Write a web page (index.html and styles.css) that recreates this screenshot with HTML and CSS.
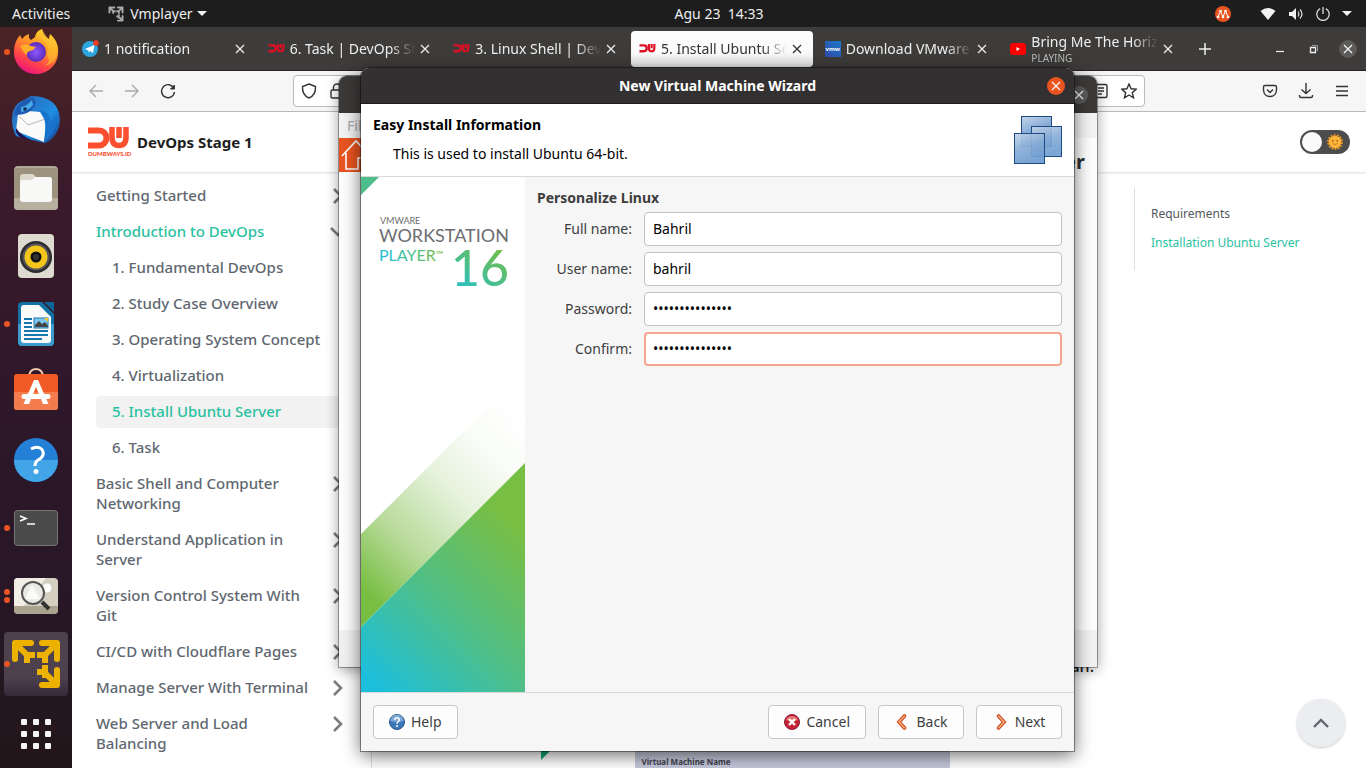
FILE: index.html
```html
<!DOCTYPE html>
<html lang="en">
<head>
<meta charset="utf-8">
<title>New Virtual Machine Wizard</title>
<link rel="stylesheet" href="styles.css">
</head>
<body>
<svg class="defs" aria-hidden="true">
  <defs>
    <symbol id="vmw" viewBox="0 0 64 64">
      <g fill="none" stroke="currentColor" stroke-width="6" stroke-linejoin="round" stroke-linecap="round">
        <path d="M27 11H11V27M38 11H53V27M38 53H53V38"/>
      </g>
      <g fill="none" stroke="currentColor" stroke-width="6">
        <path d="M12 12L24 24M52 12L41 23M52 52L41 41M20 23H31M23 21V31M33 23H44M41 20V31M33 40H44M41 33V46"/>
      </g>
    </symbol>
    <symbol id="x" viewBox="0 0 10 10"><path d="M1 1L9 9M9 1L1 9" fill="none" stroke="currentColor" stroke-width="1.3"/></symbol>
    <symbol id="dw" viewBox="0 0 41 23">
      <path d="M0 3.500H11A7.500 7.500 0 0 1 11 18.500H0" fill="none" stroke="currentColor" stroke-width="6"/>
      <path d="M24 0V10Q24 18.500 31 18.500T38 10V0M31 0V11" fill="none" stroke="currentColor" stroke-width="5.500"/>
    </symbol>
    <symbol id="chev" viewBox="0 0 12 16"><path d="M2 1L9 8L2 15" fill="none" stroke="#7b7b7b" stroke-width="2.600"/></symbol>
  </defs>
</svg>

<div class="desktop">
  <header class="topbar">
    <div class="topbar-left">
      <button class="plain">Activities</button>
      <button class="plain app-menu"><svg width="20" height="20" class="gray"><use href="#vmw"/></svg>Vmplayer<span class="caret"></span></button>
    </div>
    <time class="clock">Agu 23&nbsp; 14:33</time>
    <div class="tray">
      <svg width="16" height="16" viewBox="0 0 16 16"><circle cx="8" cy="8" r="8" fill="#e95420"/><path d="M3 11L5.500 5L8 11L10.500 5L13 11" fill="none" stroke="#fff" stroke-width="1"/><g fill="#fff"><circle cx="3" cy="11" r="1.300"/><circle cx="5.500" cy="5" r="1.300"/><circle cx="8" cy="11" r="1.300"/><circle cx="10.500" cy="5" r="1.300"/><circle cx="13" cy="11" r="1.300"/></g></svg>
      <svg class="wifi" width="16" height="14" viewBox="0 0 16 14"><path d="M0.500 4Q8 -2 15.500 4L8 13Z" fill="#f2f2f2"/></svg>
      <svg width="16" height="14" viewBox="0 0 16 14"><path d="M1 5H4L8 1V13L4 9H1Z" fill="#f2f2f2"/><path d="M10 4.500Q11.800 7 10 9.500M12 2.500Q16 7 12 11.500" fill="none" stroke="#ddd" stroke-width="1.200"/></svg>
      <svg width="14" height="14" viewBox="0 0 14 14"><path d="M4.200 1.700A6.200 6.200 0 1 0 9.800 1.700M7 0V7" fill="none" stroke="#ddd" stroke-width="1.300"/></svg>
      <span class="caret"></span>
    </div>
  </header>

  <div class="work">
    <nav class="dock" aria-label="Dock">
      <button aria-label="Firefox"><svg viewBox="0 0 64 64"><defs><linearGradient id="ff" x1="0.800" y1="0" x2="0.300" y2="1"><stop offset="0" stop-color="#ffe226"/><stop offset=".45" stop-color="#ff8a2a"/><stop offset=".75" stop-color="#ff3f4c"/><stop offset="1" stop-color="#e5127f"/></linearGradient><radialGradient id="fp"><stop offset="0" stop-color="#9059ff"/><stop offset="1" stop-color="#5b2bb8"/></radialGradient></defs><circle cx="3" cy="32" r="3" fill="#e95420"/><path d="M31 17C32 12 35 10 38 9C39 15 42 17 45 19L46 14C53 20 55 27 54 34C53 46 43 54 32 54C19 54 10 44 10 32C10 25 12 20 16 15L18 19Q21 15 25 14Q24 18 27 20Z" fill="url(#ff)"/><circle cx="32" cy="32" r="10" fill="url(#fp)"/><path d="M16 26Q22 23 27 26L32 27Q30 30 26 31Q22 32 23 36Q19 32 16 26Z" fill="#ffae2b"/><path d="M33 16Q46 20 43 36Q48 43 39 46Q55 44 53 26Q51 20 46 14L45 19Q42 17 38 9Q35 11 33 16Z" fill="#fdc52f" opacity=".6"/></svg></button>
      <button aria-label="Thunderbird"><svg viewBox="0 0 64 64"><defs><linearGradient id="tb" x1="0" y1="0" x2="1" y2="1"><stop offset="0" stop-color="#2c62b8"/><stop offset=".6" stop-color="#1f8ee0"/><stop offset="1" stop-color="#173a8c"/></linearGradient></defs><path d="M8 32Q8 16 20 12L27 8Q50 8 55 25Q58 38 51 47Q46 54 40 55L12 48Q8 40 8 32Z" fill="url(#tb)"/><path d="M14 26Q20 22 36 24L42 34L40 54L12 43Z" fill="#fafafa"/><path d="M15 28L24 37L41 31" fill="none" stroke="#b8b8b8"/><path d="M10 28Q12 14 28 9Q34 12 30 19Q26 26 13 27Z" fill="#1d5bb0"/><path d="M17 19Q23 18 28 12L29 17Q24 23 17 24Z" fill="#48a8e8"/><circle cx="21" cy="21" r="1.800" fill="#142a50"/><path d="M12 40Q17 48 28 52Q16 52 12 44Z" fill="#241250"/><path d="M36 22Q48 24 45 36L54 27Q54 40 45 49L40 55Q43 40 40 30Z" fill="#1873cc"/></svg></button>
      <button aria-label="Files"><svg viewBox="0 0 64 64"><rect x="10" y="10" width="44" height="44" rx="4" fill="#9c927e"/><path d="M11 13Q11 11 14 11H50Q53 11 53 13" stroke="#c4bdab" fill="none"/><path d="M10 42H54V50Q54 54 50 54H14Q10 54 10 50Z" fill="#b7b09e"/><path d="M16 21Q16 18 19 18H29L32 21H45Q48 21 48 24V34H16Z" fill="#ddd8cc"/><path d="M16 26Q16 24 18 24H28L31 21H45Q48 21 48 24V43Q48 46 45 46H19Q16 46 16 43Z" fill="#f8f8f7"/></svg></button>
      <button aria-label="Rhythmbox"><svg viewBox="0 0 64 64"><rect x="14" y="10" width="36" height="44" rx="4" fill="#dedad0"/><circle cx="32" cy="33" r="16" fill="#2b2b30"/><circle cx="32" cy="33" r="13.500" fill="#55555b"/><circle cx="32" cy="33" r="11.500" fill="#f4c61b"/><circle cx="32" cy="33" r="5.500" fill="#111"/><circle cx="32" cy="33" r="3" fill="#333"/></svg></button>
      <button aria-label="LibreOffice Writer"><svg viewBox="0 0 64 64"><circle cx="3" cy="32" r="3" fill="#e95420"/><path d="M18 10H38L50 22V50Q50 54 46 54H18Q14 54 14 50V14Q14 10 18 10Z" fill="#1271a5"/><path d="M14 32H50V50Q50 54 46 54H18Q14 54 14 50Z" fill="#3c9ccd"/><path d="M40 10H50V20Z" fill="#0e6496"/><path d="M20 13H35L47 25V48Q47 51 44 51H20Q17 51 17 48V16Q17 13 20 13Z" fill="#fafafa"/><path d="M20 27H28M20 31H28M20 35H28M20 39H44M20 43H44M20 47H38" stroke="#1478ae" stroke-width="1.800"/><rect x="30" y="26" width="14" height="10" fill="#7ec7f1" stroke="#1478ae"/><path d="M31 35V33L35 29L38 32L41 30L44 34V35Z" fill="#444"/><path d="M40 26H44V30Z" fill="#f6c51b"/></svg></button>
      <button aria-label="Ubuntu Software"><svg viewBox="0 0 64 64"><path d="M25 18Q25 9 32 9T39 18" fill="none" stroke="#f5c9ad" stroke-width="2"/><rect x="10" y="14" width="44" height="36" rx="3" fill="#f05a24"/><path d="M10 32H54V47Q54 50 51 50H13Q10 50 10 47Z" fill="#f37b4d"/><path d="M30 20H34L44.500 44H39L32 27L25 44H19.500Z" fill="#fff"/><path d="M20 36.500H44" stroke="#fff" stroke-width="5" stroke-linecap="round"/></svg></button>
      <button aria-label="Help"><svg viewBox="0 0 64 64"><circle cx="32" cy="32" r="22" fill="#2380d6"/><path d="M10 32A22 22 0 0 0 54 32Z" fill="#41a5e8"/><path d="M27 21Q32 18 36 20Q40 22 39 27Q38 30 34 32Q31 34 31 38" fill="none" stroke="#fff" stroke-width="3"/><circle cx="32" cy="43.500" r="2.500" fill="#fff"/></svg></button>
      <button aria-label="Terminal"><svg viewBox="0 0 64 64"><circle cx="3" cy="32" r="3" fill="#e95420"/><rect x="10.500" y="14.500" width="43" height="35" rx="3" fill="#4b4b4b" stroke="#777"/><path d="M16 20L22 22.500L16 25M23 28H31" fill="none" stroke="#fff" stroke-width="1.600"/></svg></button>
      <button aria-label="Image Viewer"><svg viewBox="0 0 64 64"><circle cx="3" cy="28" r="3" fill="#e95420"/><circle cx="3" cy="36" r="3" fill="#e95420"/><rect x="10" y="14" width="44" height="36" rx="4" fill="#d3cfc1"/><path d="M14 14H42L20 42H10V18Q10 14 14 14Z" fill="#f1eee6"/><path d="M10 42H54V46Q54 50 50 50H14Q10 50 10 46Z" fill="#aaa38f"/><circle cx="43" cy="24" r="4.500" fill="#fff"/><circle cx="29" cy="29" r="11" fill="#eceae4" stroke="#555" stroke-width="2"/><path d="M21 35L28 21L36 35Z" fill="#fafafa"/><path d="M38 38L45 45" stroke="#333" stroke-width="4"/></svg></button>
      <button aria-label="VMware Player" class="current"><svg viewBox="0 0 64 64"><circle cx="3" cy="32" r="3" fill="#e95420"/><use href="#vmw" color="#edb200"/></svg></button>
      <button aria-label="Show Applications" class="apps"><svg viewBox="0 0 30 30"><g fill="#f4f4f4"><rect width="6" height="6" rx="1"/><rect x="12" width="6" height="6" rx="1"/><rect x="24" width="6" height="6" rx="1"/><rect y="12" width="6" height="6" rx="1"/><rect x="12" y="12" width="6" height="6" rx="1"/><rect x="24" y="12" width="6" height="6" rx="1"/><rect y="24" width="6" height="6" rx="1"/><rect x="12" y="24" width="6" height="6" rx="1"/><rect x="24" y="24" width="6" height="6" rx="1"/></g></svg></button>
    </nav>

    <div class="browser">
      <div class="tabstrip">
        <div class="tabs">
          <div class="tab"><svg width="17" height="17" viewBox="0 0 17 17"><circle cx="8" cy="9" r="8" fill="#2ca5e0"/><path d="M3 9L12.500 5L11 13L8 11L6.500 12.500V10.500Z" fill="#fff"/><circle cx="14" cy="3" r="2.800" fill="#f43b20"/></svg><span class="title">1 notification</span><button class="close" aria-label="Close tab"><svg><use href="#x"/></svg></button></div>
          <div class="tab"><svg class="red" width="17" height="9"><use href="#dw"/></svg><span class="title">6. Task | DevOps Stage 1</span><button class="close" aria-label="Close tab"><svg><use href="#x"/></svg></button></div>
          <div class="tab"><svg class="red" width="17" height="9"><use href="#dw"/></svg><span class="title">3. Linux Shell | DevOps</span><button class="close" aria-label="Close tab"><svg><use href="#x"/></svg></button></div>
          <div class="tab active"><svg class="red" width="17" height="9"><use href="#dw"/></svg><span class="title">5. Install Ubuntu Server</span><button class="close" aria-label="Close tab"><svg><use href="#x"/></svg></button></div>
          <div class="tab"><span class="vmw-fav">vmw</span><span class="title">Download VMware</span><button class="close" aria-label="Close tab"><svg><use href="#x"/></svg></button></div>
          <div class="tab"><svg width="16" height="12" viewBox="0 0 16 12"><rect width="16" height="12" rx="3" fill="#f00"/><path d="M6.500 4L10 6L6.500 8Z" fill="#fff"/></svg><span class="title">Bring Me The Horizon<small>PLAYING</small></span><button class="close" aria-label="Close tab"><svg><use href="#x"/></svg></button></div>
        </div>
        <button class="newtab" aria-label="New tab"><svg width="12" height="12" viewBox="0 0 12 12"><path d="M6 0V12M0 6H12" stroke="#eee" stroke-width="1.500"/></svg></button>
        <div class="controls">
          <button aria-label="Minimize"><svg width="10" height="10" viewBox="0 0 10 10"><path d="M1 7.500H9" stroke="#eee" stroke-width="1.200"/></svg></button>
          <button aria-label="Restore"><svg width="10" height="10" viewBox="0 0 10 10"><path d="M1.500 3.500H6.500V8.500H1.500Z" fill="none" stroke="#eee" stroke-width="1.300"/><path d="M3 1.500H8.500V7" fill="none" stroke="#999"/></svg></button>
          <button aria-label="Close window"><span class="round"><svg><use href="#x"/></svg></span></button>
        </div>
      </div>

      <div class="toolbar">
        <button aria-label="Back" class="dim"><svg width="16" height="16" viewBox="0 0 16 16"><path d="M15 8H2M8 2L2 8L8 14"/></svg></button>
        <button aria-label="Forward" class="dim"><svg width="16" height="16" viewBox="0 0 16 16"><path d="M1 8H14M8 2L14 8L8 14"/></svg></button>
        <button aria-label="Reload"><svg width="16" height="16" viewBox="0 0 16 16"><path d="M14 5.500A6.500 6.500 0 1 0 14.500 9"/><path d="M14.500 2V6H10.500Z" fill="#333" stroke-width="1"/></svg></button>
        <span class="spacer"></span>
        <div class="urlbar">
          <svg width="16" height="16" viewBox="0 0 16 16"><path d="M8 1L14.500 3.500Q15 12 8 15Q1 12 1.500 3.500Z"/></svg>
          <svg width="16" height="16" viewBox="0 0 16 16"><rect x="2" y="7" width="12" height="8" rx="1.500"/><path d="M4.500 7V4.500A3.500 3.500 0 0 1 11.500 4.500V7"/></svg>
          <input type="text" aria-label="Address">
          <svg width="16" height="16" viewBox="0 0 16 16"><rect x="2" y="1.500" width="12" height="13" rx="1.500"/><path d="M5 5H11M5 8H11M5 11H9"/></svg>
          <svg width="16" height="16" viewBox="0 0 16 16"><path d="M8 1L10.100 5.800L15.200 6.200L11.300 9.600L12.500 14.800L8 12L3.500 14.800L4.700 9.600L0.800 6.200L5.900 5.800Z"/></svg>
        </div>
        <span class="spacer"></span>
        <button aria-label="Pocket"><svg width="16" height="16" viewBox="0 0 16 16"><path d="M3 2.500H13Q14.500 2.500 14.500 4V7Q14 13.500 8 13.500T1.500 7V4Q1.500 2.500 3 2.500ZM5 6.500L8 9.500L11 6.500"/></svg></button>
        <button aria-label="Downloads"><svg width="16" height="16" viewBox="0 0 16 16"><path d="M8 0V10.500M3.500 6.500L8 10.500L12.500 6.500M1.500 12V13Q1.500 14.500 3 14.500H13Q14.500 14.500 14.500 13V12"/></svg></button>
        <button aria-label="Menu"><svg width="16" height="16" viewBox="0 0 16 16"><path d="M2 3.500H14M2 8H14M2 12.500H14"/></svg></button>
      </div>

      <div class="page">
        <header class="site">
          <a href="#" class="brand">
            <span class="logo"><svg width="41" height="23"><use href="#dw"/></svg><span>DUMBWAYS.ID</span></span>
            DevOps Stage 1
          </a>
          <label class="toggle"><input type="checkbox" aria-label="Dark mode"><span class="knob"></span><svg width="16" height="16" viewBox="0 0 16 16"><circle cx="8" cy="8" r="7" fill="none" stroke="#f79a1c" stroke-width="1.600" stroke-dasharray="2 1.140"/><circle cx="8" cy="8" r="6.200" fill="#fcb53a"/><circle cx="5.800" cy="6.800" r=".9" fill="#a45c10"/><circle cx="10.200" cy="6.800" r=".9" fill="#a45c10"/><path d="M5.500 9.500Q8 11.500 10.500 9.500" stroke="#c8781b" fill="none"/></svg></label>
        </header>
        <div class="docs">
          <nav class="sidebar" aria-label="Docs">
            <a href="#">Getting Started<svg><use href="#chev"/></svg></a>
            <a href="#" class="on">Introduction to DevOps<svg class="open"><use href="#chev"/></svg></a>
            <div class="sub">
              <a href="#">1. Fundamental DevOps</a>
              <a href="#">2. Study Case Overview</a>
              <a href="#">3. Operating System Concept</a>
              <a href="#">4. Virtualization</a>
              <a href="#" class="on here">5. Install Ubuntu Server</a>
              <a href="#">6. Task</a>
            </div>
            <a href="#">Basic Shell and Computer<br>Networking<svg><use href="#chev"/></svg></a>
            <a href="#">Understand Application in<br>Server<svg><use href="#chev"/></svg></a>
            <a href="#">Version Control System With<br>Git<svg><use href="#chev"/></svg></a>
            <a href="#">CI/CD with Cloudflare Pages<svg><use href="#chev"/></svg></a>
            <a href="#">Manage Server With Terminal<svg><use href="#chev"/></svg></a>
            <a href="#">Web Server and Load<br>Balancing<svg><use href="#chev"/></svg></a>
          </nav>
          <main class="article">
            <p>an.</p>
            <div class="figure"><svg width="94" height="60" viewBox="0 0 94 60"><path d="M0 0H30L0 30Z" fill="#12a575"/></svg><div class="shot">Virtual Machine Name</div></div>
          </main>
          <nav class="toc" aria-label="On this page">
            <div class="toc-list"><a href="#">Requirements</a><a href="#" class="on">Installation Ubuntu Server</a></div>
          </nav>
        </div>
        <button class="totop" aria-label="Scroll to top"><svg width="18" height="12" viewBox="0 0 18 12"><path d="M2 10L9 3L16 10" fill="none" stroke="#606770" stroke-width="2.400"/></svg></button>
      </div>
    </div>
  </div>

  <section class="window player" aria-label="VMware Player">
    <div class="player-title"><span class="round"><svg><use href="#x"/></svg></span></div>
    <div class="player-menu">File</div>
    <div class="player-body">
      <svg width="34" height="34" viewBox="0 0 34 34"><rect width="34" height="34" fill="#e95420"/><path d="M3 18L17 3L31 18M7 15V31H19V20H26V31" fill="none" stroke="#fff" stroke-width="1.600"/></svg>
      <h2>Player</h2>
    </div>
    <div class="player-foot"></div>
  </section>

  <section class="window wizard" role="dialog" aria-labelledby="wt">
    <div class="wizard-title"><h1 id="wt">New Virtual Machine Wizard</h1><button class="round orange" aria-label="Close"><svg><use href="#x"/></svg></button></div>
    <div class="wizard-head">
      <div><h2>Easy Install Information</h2><p>This is used to install Ubuntu 64-bit.</p></div>
      <svg width="48" height="48" viewBox="0 0 48 48"><defs><linearGradient id="pane" x1="0" y1="0" x2="0.400" y2="1"><stop offset="0" stop-color="#c3d4e9"/><stop offset=".55" stop-color="#86abd6"/><stop offset="1" stop-color="#6d9dd0"/></linearGradient></defs><g fill="url(#pane)" stroke="#1f4a86"><rect x="7.500" y=".5" width="30" height="30"/><rect x="17.500" y="10.500" width="30" height="30" fill-opacity=".9"/><rect x=".5" y="17.500" width="30" height="30" fill-opacity=".92"/></g></svg>
    </div>
    <div class="wizard-body">
      <svg class="art" viewBox="0 0 164 515" width="164" height="515">
        <defs>
          <linearGradient id="g1" gradientUnits="userSpaceOnUse" x1="10" y1="505" x2="160" y2="355"><stop offset="0" stop-color="#1bbfdc"/><stop offset=".5" stop-color="#50bf86"/><stop offset="1" stop-color="#78be43"/></linearGradient>
          <linearGradient id="g2" gradientUnits="userSpaceOnUse" x1="14" y1="423" x2="179" y2="258"><stop offset="0" stop-color="#78be43"/><stop offset=".26" stop-color="#b7da98"/><stop offset=".55" stop-color="#e4f1da"/><stop offset=".8" stop-color="#f9fcf7"/><stop offset="1" stop-color="#fff"/></linearGradient>
          <linearGradient id="g3"><stop offset="0" stop-color="#1bbfdc"/><stop offset="1" stop-color="#78be43"/></linearGradient>
          <linearGradient id="g4" x1="0" y1="1" x2=".6" y2="0"><stop offset="0" stop-color="#1bbfdc"/><stop offset="1" stop-color="#78be43"/></linearGradient>
        </defs>
        <rect width="164" height="515" fill="#fff"/>
        <path d="M0 0H18L0 18Z" fill="#4ebd8c"/>
        <path d="M0 357L164 193V286L0 450Z" fill="url(#g2)"/>
        <path d="M0 450L164 286V515H0Z" fill="url(#g1)"/>
        <g class="art-text"><text x="19" y="47" font-size="9" fill="#6d6e71">VMWARE</text><text x="18" y="65" font-size="18" fill="#6d6e71">WORKSTATION</text><text x="18" y="84" font-size="16" fill="url(#g3)">PLAYER<tspan font-size="10" dy="-3">™</tspan></text><text x="90" y="109" font-size="50" class="big" fill="url(#g4)">16</text></g>
      </svg>
      <form class="fields">
        <h3>Personalize Linux</h3>
        <label for="fn">Full name:</label><input id="fn" type="text" value="Bahril">
        <label for="un">User name:</label><input id="un" type="text" value="bahril">
        <label for="pw">Password:</label><input id="pw" type="password" value="aaaaaaaaaaaaaaa">
        <label for="cf">Confirm:</label><input id="cf" class="focus" type="password" value="aaaaaaaaaaaaaaa">
      </form>
    </div>
    <div class="wizard-foot">
      <button class="btn help"><svg width="16" height="16" viewBox="0 0 16 16"><circle cx="8" cy="8" r="7.500" fill="#3c78b8" stroke="#2a5688"/><path d="M1.500 7A6.500 6.500 0 0 1 14.500 7Q8 9 1.500 7Z" fill="#7ba7d6"/><path d="M5.700 5.800Q6 3.700 8 3.700T10.300 5.800Q10.300 7 8.900 8Q8 8.700 8 9.800" fill="none" stroke="#fff" stroke-width="1.500"/><circle cx="8" cy="12" r="1" fill="#fff"/></svg>Help</button>
      <button class="btn"><svg width="16" height="16" viewBox="0 0 16 16"><circle cx="8" cy="8" r="7.500" fill="#c5243a" stroke="#8c1838"/><path d="M2 6A6.500 6.500 0 0 1 14 6Q8 8 2 6Z" fill="#e8756c"/><path d="M5 5L11 11M11 5L5 11" stroke="#fff" stroke-width="2.400"/></svg>Cancel</button>
      <button class="btn"><svg width="16" height="16" viewBox="0 0 16 16"><path d="M10.500 2L5 8L10.500 14" fill="none" stroke="#c9431f" stroke-width="3.600" stroke-linecap="round"/><path d="M10.500 2L5 8L10.500 14" fill="none" stroke="#f8ae70" stroke-width="1.600" stroke-linecap="round"/></svg>Back</button>
      <button class="btn"><svg width="16" height="16" viewBox="0 0 16 16"><path d="M5.500 2L11 8L5.500 14" fill="none" stroke="#c9431f" stroke-width="3.600" stroke-linecap="round"/><path d="M5.500 2L11 8L5.500 14" fill="none" stroke="#f8ae70" stroke-width="1.600" stroke-linecap="round"/></svg>Next</button>
    </div>
  </section>
</div>
</body>
</html>
```
FILE: styles.css
```css
* { box-sizing: border-box; }
body { margin: 0; font: 14px/20px "Noto Sans", "Open Sans", sans-serif; color: #3d3d3d; }
button, input { font: inherit; color: inherit; }
button { border: 0; padding: 0; background: none; display: flex; align-items: center; justify-content: center; }
a { color: inherit; text-decoration: none; }
h1, h2, h3, p { margin: 0; font-size: 14px; }
svg { flex: none; display: block; }
.defs { position: absolute; width: 0; height: 0; }
.desktop { position: relative; height: 100vh; overflow: hidden; display: flex; flex-direction: column; }

.topbar { height: 27px; flex: none; background: #1d1d1d; color: #eee; display: grid; grid-template-columns: 1fr auto 1fr; align-items: center; padding: 0 14px 0 12px; font-size: 14px; }
.topbar-left { display: flex; gap: 36px; }
.app-menu { gap: 4px; }
.gray { color: #aaa; }
.clock { padding-left: 74px; }
.caret { border: 5px solid transparent; border-top-color: #f2f2f2; border-bottom: 0; }
.tray { display: flex; justify-content: flex-end; align-items: center; gap: 12px; }
.tray .wifi { margin-left: 17px; }

.work { flex: 1; min-height: 0; display: flex; }
.dock { width: 72px; flex: none; overflow: hidden; background: linear-gradient(#4a2324, #3a1a2b 22%, #2d172a 55%, #281727 75%, #22161a); display: flex; flex-direction: column; align-items: center; justify-content: flex-end; gap: 4px; }
.dock button { flex: none; width: 64px; height: 64px; border-radius: 4px; }
.dock svg { width: 64px; height: 64px; }
.dock .current { background: linear-gradient(#4d414d 70%, #38293a); }
.dock .apps { height: 68px; }
.dock .apps svg { width: 30px; height: 30px; }

.browser { flex: 1; min-width: 0; display: flex; flex-direction: column; }
.tabstrip { height: 44px; flex: none; display: flex; align-items: center; background: #3e3c3a; border-bottom: 1px solid #262224; color: #eee; padding-right: 1px; }
.tabs { flex: 1; min-width: 0; display: flex; }
.tab { flex: 1; min-width: 0; height: 36px; margin: 0 2px; padding: 0 11px 0 8px; border-radius: 4px; display: flex; align-items: center; gap: 5px; }
.tab.active { background: linear-gradient(#fbfbfb 60%, #e4e4e4); color: #333; }
.title { flex: 1; min-width: 0; white-space: nowrap; overflow: hidden; line-height: 18px; -webkit-mask-image: linear-gradient(90deg, #000 80%, transparent); mask-image: linear-gradient(90deg, #000 80%, transparent); }
.title small { display: block; font-size: 10px; line-height: 14px; color: #bbb; }
.close svg, .round svg { width: 10px; height: 10px; }
.red { color: #dc0f24; }
.vmw-fav { width: 16px; height: 16px; background: linear-gradient(45deg, #2f4aa8, #1a78c8); color: #fff; font-size: 6px; line-height: 16px; font-weight: 700; text-align: center; }
.newtab { width: 38px; height: 36px; margin-right: 39px; }
.controls { display: flex; }
.controls button { width: 34px; height: 34px; }
.round { width: 18px; height: 18px; border-radius: 9px; background: #5c5b5a; color: #f2f2f2; display: flex; align-items: center; justify-content: center; }

.toolbar { height: 41px; flex: none; display: flex; align-items: center; background: #f6f6f6; border-bottom: 1px solid #b9b9b9; padding: 0 6px; }
.toolbar button { width: 36px; height: 32px; }
.toolbar svg { fill: none; stroke: #333; stroke-width: 1.4; }
.toolbar .dim svg { stroke: #aaa; }
.spacer { flex: 5; }
.urlbar { flex: 39; height: 32px; display: flex; align-items: center; gap: 12px; padding: 0 7px; background: #fff; border: 1px solid #bbb; border-radius: 4px; }
.urlbar input { flex: 1; min-width: 0; border: 0; background: none; }

.page { position: relative; flex: 1; min-height: 0; overflow: hidden; background: #fff; display: flex; flex-direction: column; }
.site { height: 60px; flex: none; display: flex; align-items: center; justify-content: space-between; padding: 0 16px; box-shadow: 0 1px 2px #0002; }
.brand { display: flex; align-items: center; gap: 8px; font-size: 15px; font-weight: 700; color: #1c1e21; }
.logo { width: 41px; color: #fb4f2f; font-family: Lato, sans-serif; font-size: 6px; line-height: 8px; font-weight: 900; }
.toggle { display: flex; align-items: center; justify-content: space-between; width: 50px; height: 24px; padding: 0 7px 0 2px; border-radius: 12px; background: #4d4d4d; }
.toggle input { position: absolute; opacity: 0; }
.knob { width: 20px; height: 20px; border-radius: 50%; background: #fafafa; }
.docs { flex: 1; min-height: 0; display: flex; }
.sidebar { width: 300px; flex: none; border-right: 1px solid #dadde1; padding: 8px 17px 8px 8px; display: flex; flex-direction: column; gap: 4px; font-size: 15px; font-weight: 500; color: #606770; }
.sidebar a { display: grid; grid-template-columns: 1fr 12px; padding: 5px 10px 7px 16px; border-radius: 4px; line-height: 20px; white-space: nowrap; }
.sidebar svg { width: 12px; height: 16px; margin-top: 3px; grid-column: 2; grid-row: 1; }
.sidebar .open { transform: rotate(90deg); }
.sub { display: flex; flex-direction: column; gap: 4px; padding-left: 16px; }
.sub a { margin-left: -16px; padding-left: 32px; }
.sidebar .sub a { margin-left: 0; padding-left: 16px; }
.sidebar .here { background: #f2f2f2; }
.on { color: #29c1a1; }
.article { flex: 1; min-width: 0; padding-top: 482px; color: #1c1e21; }
.article p { text-align: right; padding-right: 24px; font-size: 16px; line-height: 24px; font-weight: 500; }
.figure { display: flex; justify-content: center; padding-top: 52px; }
.shot { width: 315px; height: 60px; padding: 24px 7px 0; background: #c5c8da; font-size: 8px; line-height: 16px; font-weight: 700; color: #41414f; }
.toc { width: 248px; flex: none; padding: 16px 16px 0; font-size: 12px; }
.toc-list { border-left: 1px solid #dadde1; padding: 16px 0 17px 16px; display: flex; flex-direction: column; gap: 9px; color: #525860; }
.toc-list .on { color: #29c1a1; }
.totop { position: absolute; right: 21px; bottom: 21px; width: 48px; height: 48px; border-radius: 50%; background: #ebedf0; box-shadow: 0 1px 3px #0003; }

.window { position: absolute; display: flex; flex-direction: column; border-radius: 8px 8px 0 0; overflow: hidden; }
.player { left: 339px; top: 76px; width: 758px; height: 591px; background: #fdfdfd; box-shadow: 0 0 0 1px #0005, 0 3px 14px #0006; }
.player-title { height: 37px; background: #3c3a39; display: flex; align-items: center; justify-content: flex-end; padding-right: 9px; }
.player-menu { height: 25px; padding: 3px 8px; background: #f3f3f3; color: #aaa; }
.player-body { flex: 1; display: flex; justify-content: space-between; padding-right: 12px; }
.player-body h2 { font-size: 20px; line-height: 48px; color: #2e3436; }
.player-foot { height: 37px; background: #f1f1f1; }

.wizard { left: 361px; top: 68px; width: 713px; background: #f6f6f6; box-shadow: 0 0 0 1px #0006, 0 4px 18px #0009; }
.wizard-title { height: 36px; display: flex; align-items: center; background: #333031; border-bottom: 1px solid #1e1b1c; color: #fff; padding: 0 9px 0 27px; }
.wizard-title h1 { flex: 1; text-align: center; }
.orange { background: #e95420; }
.wizard-head { display: flex; justify-content: space-between; align-items: center; background: #fff; color: #000; border-bottom: 1px solid #d9d9d9; padding: 11px 12px; }
.wizard-head p { padding: 9px 0 1px 20px; }
.wizard-body { display: flex; }
.art-text { font-family: Lato, sans-serif; }
.big { font-weight: 500; }
.fields { flex: 1; display: grid; grid-template-columns: 95px 1fr; align-content: start; align-items: center; gap: 6px 12px; padding: 11px 12px; }
.fields h3 { grid-column: 1 / 3; height: 18px; }
.fields label { text-align: right; }
.fields input { min-width: 0; width: 100%; height: 34px; padding: 0 8px 2px; border: 1px solid #c2c2c2; border-radius: 4px; background: #fff; color: #000; outline: 0; }
.fields .focus { border: 2px solid #f2a78e; padding: 0 7px 2px; }
.wizard-foot { display: flex; gap: 12px; padding: 12px; border-top: 1px solid #d9d9d9; }
.btn { min-width: 86px; height: 34px; padding: 0 15px; gap: 6px; background: #fdfdfd; border: 1px solid #c6c6c6; border-radius: 4px; }
.btn.help { min-width: 0; margin-right: auto; }
```
